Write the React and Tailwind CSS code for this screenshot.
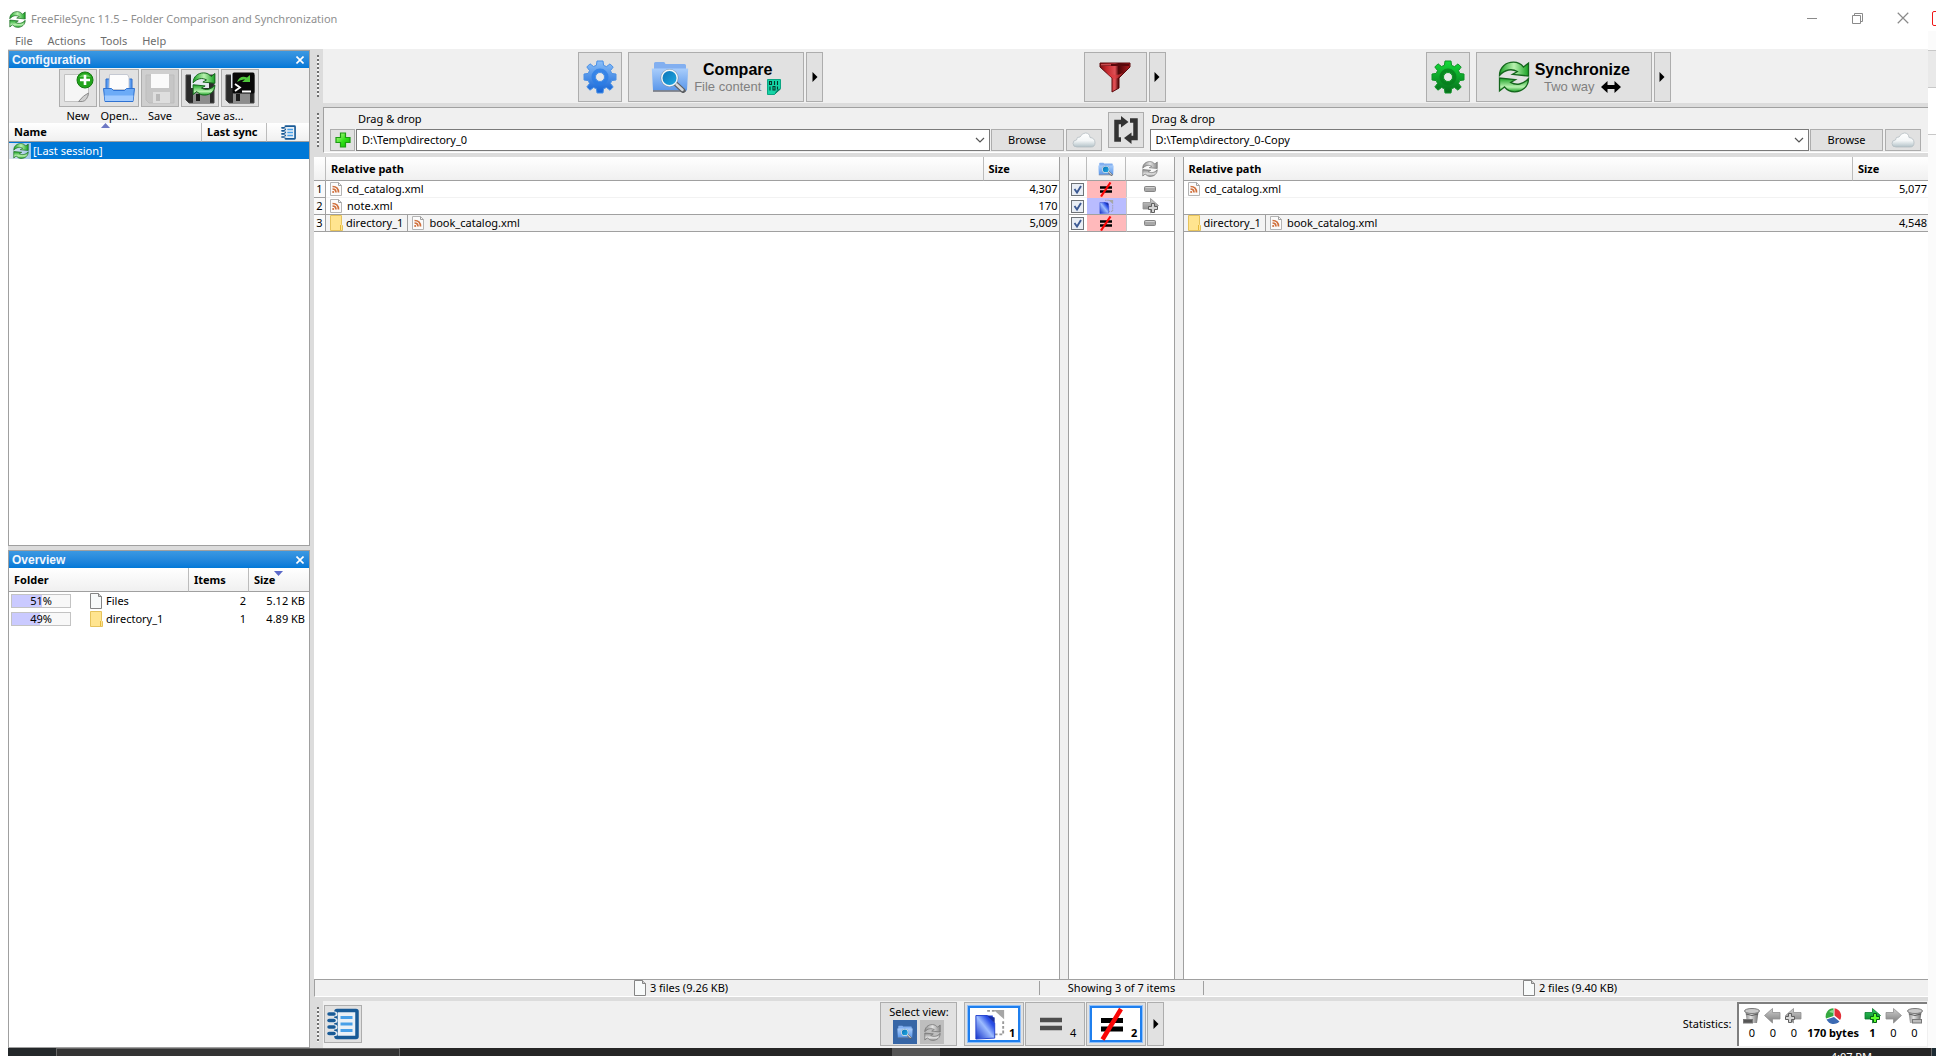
import React from "react";

/* ---------- icons ---------- */

function SyncIcon({ size = 32, gray = false, id }) {
  const dark = gray ? "#6e6e6e" : "#14661c";
  const light = gray ? "#e2e2e2" : "#b9f2b0";
  const mid = gray ? "#8c8c8c" : "#17a022";
  const d = "M1.5 14.5 C1.5 6 8 1.2 15.5 1.2 C20 1.2 23 3 25.5 6 L30.5 2 V15 L14.5 13.4 L19.4 10.6 C14 7.4 7 8.2 1.5 14.5 Z";
  return (
    <svg width={size} height={size} viewBox="0 0 32 32" aria-hidden="true" className="shrink-0">
      <defs>
        <linearGradient id={id} x1="0" y1="0" x2="0" y2="1">
          <stop offset="0" stopColor={mid} />
          <stop offset="0.35" stopColor={light} />
          <stop offset="1" stopColor={mid} />
        </linearGradient>
        <linearGradient id={id + "b"} x1="0" y1="0" x2="1" y2="0">
          <stop offset="0" stopColor={mid} />
          <stop offset="0.5" stopColor={light} />
          <stop offset="1" stopColor={mid} />
        </linearGradient>
      </defs>
      <path d={d} fill={`url(#${id}b)`} stroke={dark} strokeWidth="1.3" />
      <path d={d} transform="rotate(180 16 16)" fill={`url(#${id})`} stroke={dark} strokeWidth="1.3" />
    </svg>
  );
}

function Gear({ id, top, bottom, edge, inner }) {
  return (
    <svg width="34" height="34" viewBox="0 0 34 34" aria-hidden="true">
      <defs>
        <linearGradient id={id} gradientUnits="userSpaceOnUse" x1="0" y1="0" x2="0" y2="34">
          <stop offset="0" stopColor={top} />
          <stop offset="1" stopColor={bottom} />
        </linearGradient>
      </defs>
      <path
        fill={`url(#${id})`}
        stroke={edge}
        strokeWidth="1"
        d="M14 1h6l.6 4.4 2.9 1.2L27 3.900l3.200 3.200-2.700 3.500 1.200 2.900 4.300.5v6l-4.300.6-1.200 2.900 2.700 3.500L27 30.200l-3.500-2.700-2.900 1.200L20 33h-6l-.6-4.300-2.900-1.200L7 30.200 3.800 27l2.700-3.500-1.200-2.900L1 20v-6l4.300-.6 1.200-2.900L3.800 7 7 3.800l3.500 2.700 2.900-1.200z"
      />
      <circle cx="17" cy="17" r="8.500" fill={inner} opacity="0.75" />
      <circle cx="17" cy="17" r="4.500" fill="#e8e8e8" stroke={edge} strokeWidth="1" />
    </svg>
  );
}

function FolderSearch({ w = 38, h = 32, id }) {
  return (
    <svg width={w} height={h} viewBox="0 0 38 32" aria-hidden="true" className="shrink-0">
      <defs>
        <linearGradient id={id} x1="0" y1="0" x2="0" y2="1">
          <stop offset="0" stopColor="#a9cdfb" />
          <stop offset="1" stopColor="#5a97ea" />
        </linearGradient>
        <linearGradient id={id + "l"} x1="0" y1="0" x2="1" y2="1">
          <stop offset="0" stopColor="#0b74b8" />
          <stop offset="1" stopColor="#1fa9e2" />
        </linearGradient>
      </defs>
      <path d="M3 28V2.500Q3 1 4.500 1h8Q14 1 14.500 3h19q1.500 0 1.500 1.500V28z" fill="#82aff0" />
      <path d="M.8 7.500h36.400L36 29.500H2z" fill={`url(#${id})`} />
      <path d="M2 30h33" stroke="#6b6f7a" strokeWidth="1.500" />
      <path d="M25 23l7 6.500" stroke="#5c5f63" strokeWidth="5" strokeLinecap="round" />
      <path d="M24.500 22.500l7 6.500" stroke="#d6d8da" strokeWidth="2.500" strokeLinecap="round" />
      <circle cx="18.500" cy="17" r="9" fill="#7d93a8" />
      <circle cx="18.500" cy="17" r="8.400" fill="#f4f8fb" />
      <circle cx="18.500" cy="17" r="7" fill={`url(#${id}l)`} />
    </svg>
  );
}

function Funnel() {
  return (
    <svg width="32" height="32" viewBox="0 0 32 32" aria-hidden="true">
      <defs>
        <linearGradient id="fun" x1="0" y1="0" x2="1" y2="0">
          <stop offset="0" stopColor="#7d0d10" />
          <stop offset="0.22" stopColor="#c4262b" />
          <stop offset="0.5" stopColor="#e05055" />
          <stop offset="0.62" stopColor="#4c0507" />
          <stop offset="1" stopColor="#b01b20" />
        </linearGradient>
      </defs>
      <path d="M1 2h30v4L20 17v10l-7 4V17L1 6z" fill="url(#fun)" stroke="#5c0a0d" />
      <path d="M2 3h28v2H2z" fill="#5a080b" />
      <path d="M2 3h10v1.500H2z" fill="#c94a4e" />
      <path d="M8 12q8 4 16 0l-5 5q-3 1.500-6 0z" fill="#dd3a40" opacity="0.7" />
    </svg>
  );
}

function Cloud({ id }) {
  return (
    <svg width="24" height="16" viewBox="0 0 24 16" aria-hidden="true">
      <defs>
        <linearGradient id={id} x1="0" y1="0" x2="0" y2="1">
          <stop offset="0" stopColor="#ffffff" />
          <stop offset="0.55" stopColor="#f3f6f7" />
          <stop offset="1" stopColor="#b3c2c8" />
        </linearGradient>
      </defs>
      <path d="M5 15Q1 15 1 11.500 1 8 4.500 8 4.500 4.500 8 5 10 1 13.500 1 17.500 1 18 5.500 23 6 23 10.800 23 15 19 15z" fill={`url(#${id})`} stroke="#b4bdc1" strokeWidth="0.8" />
    </svg>
  );
}

function Notebook({ size }) {
  return (
    <svg width={size} height={size} viewBox="0 0 32 32" aria-hidden="true">
      <rect x="9" y="2.500" width="21" height="27" rx="1" fill="#eaf0f6" stroke="#185a96" strokeWidth="3.500" />
      {[6, 12.500, 19, 25.500].map((y) => (
        <g key={y}>
          <path d={`M3 ${y}H8`} stroke="#e6ebf0" strokeWidth="5" strokeLinecap="round" />
          <path d={`M2 ${y}H7`} stroke="#185a96" strokeWidth="3.500" strokeLinecap="round" />
        </g>
      ))}
      <path d="M13.500 9.500h12M13.500 16h12M13.500 22.500h12" stroke="#479fe8" strokeWidth="3.200" />
    </svg>
  );
}

function Page({ w = 12, h = 16 }) {
  return (
    <svg width={w} height={h} viewBox="0 0 12 16" aria-hidden="true" className="shrink-0">
      <path d="M.5.5h8l3 3v12H.5z" fill="#f8fafa" stroke="#858585" />
      <path d="M8.500.5v3h3" fill="#d0d0d0" stroke="#858585" />
    </svg>
  );
}

function XmlIcon() {
  return (
    <svg width="12" height="14" viewBox="0 0 12 14" aria-hidden="true" className="shrink-0">
      <path d="M.5.5h8l3 3v10H.5z" fill="#fbfbfb" stroke="#b4b4b4" />
      <path d="M8.500.5v3h3" fill="none" stroke="#a0a0a0" />
      <path d="M2.500 4.500q6 0 6 6M2.500 7q3.500 0 3.500 3.500" fill="none" stroke="#d0703c" strokeWidth="1.700" />
      <circle cx="3.200" cy="10" r="1.100" fill="#d0703c" />
    </svg>
  );
}

function FolderIcon() {
  return (
    <svg width="13" height="16" viewBox="0 0 13 16" aria-hidden="true" className="shrink-0">
      <path d="M.5.5h11v9l1 1v5H.5z" fill="#ffe48f" stroke="#e6c35c" />
      <path d="M10.500 10v5" stroke="#e6b93a" />
    </svg>
  );
}

function Floppy({ faded = false }) {
  const body = faded ? "#c6c6c6" : "#2b2b2b";
  return (
    <svg width="32" height="32" viewBox="0 0 32 32" aria-hidden="true">
      <path d="M2 3h28v28H5l-3-3z" fill={body} stroke={faded ? "#bdbdbd" : "#444"} />
      <rect x="7" y="2" width="18" height="14" fill={faded ? "#fafafa" : "#e4e9f0"} />
      <rect x="9" y="20" width="17" height="11" fill={faded ? "#dedede" : "#8d8d8d"} />
      <rect x="12" y="22" width="4" height="7" fill={faded ? "#b9b9b9" : "#1c1c1c"} />
    </svg>
  );
}

function NewIcon() {
  return (
    <svg width="34" height="34" viewBox="0 0 34 34" aria-hidden="true">
      <path d="M3.500 3.500h24v21l-6 6h-18z" fill="#f6f6f6" stroke="#c2c2c2" />
      <path d="M27.500 22q-5 2-10 8.500h4q5-1 6-8.500z" fill="#cfcfcf" stroke="#8e8e8e" />
      <circle cx="24" cy="9" r="8" fill="#22a51c" stroke="#147a10" />
      <path d="M18 6q6-6 12 0z" fill="#7fdc74" opacity="0.7" />
      <path d="M24 4v10M19 9h10" stroke="#fff" strokeWidth="2.600" />
    </svg>
  );
}

function OpenIcon() {
  return (
    <svg width="34" height="34" viewBox="0 0 34 34" aria-hidden="true">
      <path d="M4 8h26v12H4z" fill="#5b9cf0" stroke="#2d6ccb" />
      <path d="M7.500 3.500h18l1.500 3v12h-20z" fill="#fdfdfd" stroke="#c5c9d2" />
      <path d="M1.500 17.500h8l2 2h11l2-2h8l-1.500 13h-28z" fill="#6cabf7" stroke="#2f72d2" />
      <path d="M2.500 24.500h29l-.7 5.500h-27.600z" fill="#9fcaff" />
    </svg>
  );
}

function SaveAsSync() {
  return (
    <span className="grid">
      <span className="col-start-1 row-start-1"><Floppy /></span>
      <span className="col-start-1 row-start-1 pl-2"><SyncIcon size={24} id="sas" /></span>
    </span>
  );
}

function SaveAsBatch() {
  return (
    <span className="grid">
      <span className="col-start-1 row-start-1"><Floppy /></span>
      <span className="col-start-1 row-start-1 pl-2">
        <svg width="23" height="22" viewBox="0 0 23 22" aria-hidden="true">
          <rect x=".5" y=".5" width="22" height="21" rx="1.500" fill="#080808" />
          <path d="M5 10Q8 3 15 5.500L18 3v7h-8l3-2.500Q9 7 5 10z" fill="#4fc93c" />
          <path d="M3 12l5 3.500L3 19M10 19.500h9" fill="none" stroke="#fff" strokeWidth="1.800" />
        </svg>
      </span>
    </span>
  );
}

function NotEqual({ w, h }) {
  return (
    <svg width={w} height={h} viewBox="0 0 24 34" preserveAspectRatio="none" aria-hidden="true">
      <path d="M1 13.500h22M1 22h22" stroke="#000" strokeWidth="5" />
      <path d="M2.500 32.500L21 2" stroke="#fa0505" strokeWidth="4.500" />
    </svg>
  );
}

function NotEqualSmall() {
  return (
    <svg width="14" height="15" viewBox="0 0 14 15" aria-hidden="true">
      <path d="M1 5.500h12M1 9.500h12" stroke="#000" strokeWidth="2.600" />
      <path d="M2 14.500L11.500.5" stroke="#fa0505" strokeWidth="2.200" />
    </svg>
  );
}

function LeftOnly({ size, id }) {
  return (
    <svg width={size} height={size} viewBox="0 0 34 34" aria-hidden="true">
      <defs>
        <linearGradient id={id} x1="0" y1="1" x2="1" y2="0">
          <stop offset="0" stopColor="#1231c8" />
          <stop offset="0.5" stopColor="#9dbcff" />
          <stop offset="0.75" stopColor="#2a4ee6" />
          <stop offset="1" stopColor="#1231c8" />
        </linearGradient>
      </defs>
      <path d="M14 3h8M31 14v14h-9" fill="none" stroke="#9a9a9a" strokeWidth="2" strokeDasharray="3 2" />
      <path d="M21 2h11v10z" fill="#a6a6a6" />
      <path d="M11 8h9v24h-8z" fill="#2346dd" />
      <path d="M2 8h12l8 8v16l-20 1z" fill={`url(#${id})`} stroke="#2240cc" />
      <path d="M14 8l8 8v-6z" fill="#1a2fa0" />
    </svg>
  );
}

function Dash() {
  return (
    <svg width="12" height="6" viewBox="0 0 12 6" aria-hidden="true">
      <rect x=".5" y=".5" width="11" height="5" rx="1" fill="#a8a8a8" stroke="#858585" />
      <path d="M1.500 1.500h9" stroke="#d2d2d2" />
    </svg>
  );
}

function Arrow({ left = false, plus = false, green = false, id }) {
  return (
    <svg width="17" height="16" viewBox="0 0 17 16" aria-hidden="true">
      <defs>
        <linearGradient id={id} x1="0" y1="0" x2="0" y2="1">
          <stop offset="0" stopColor={green ? "#2fd15a" : "#cfcfcf"} />
          <stop offset="1" stopColor={green ? "#04752a" : "#7c7c7c"} />
        </linearGradient>
      </defs>
      <path
        d={left ? "M.5 7.500L8.500 .5v4h7.500v6.500H8.500v4z" : "M16.500 7.500L8.500 .5v4H1v6.500h7.500v4z"}
        fill={`url(#${id})`}
        stroke={green ? "#0a7a2f" : "#8f8f8f"}
        strokeWidth="0.8"
      />
      {plus && (
        <g transform={left ? "translate(0 5)" : "translate(6 5)"}>
          <path d="M3.500.5h3v3h3v3h-3v3h-3v-3h-3v-3h3z" fill={green ? "#5cff2a" : "#d4d4d4"} stroke={green ? "#075e14" : "#5f5f5f"} />
        </g>
      )}
    </svg>
  );
}

function Trash({ right = false, id }) {
  return (
    <svg width="17" height="16" viewBox="0 0 17 16" aria-hidden="true">
      <defs>
        <linearGradient id={id} x1="0" y1="0" x2="1" y2="0">
          <stop offset="0" stopColor="#8a8a8a" />
          <stop offset="0.4" stopColor="#e4e4e4" />
          <stop offset="1" stopColor="#6c6c6c" />
        </linearGradient>
      </defs>
      <path d="M2.500 4h13l-1.500 11h-10z" fill={`url(#${id})`} />
      <ellipse cx="9" cy="3" rx="7.500" ry="2.500" fill="#c9c9c9" stroke="#7b7b7b" />
      <path d="M3 6q6 3 12 0" stroke="#5d5d5d" fill="none" />
      <rect x={right ? 6.500 : 0.5} y="11.500" width="9" height="3.500" fill={right ? "#bcbcbc" : "#555"} stroke="#777" />
    </svg>
  );
}

function Pie() {
  return (
    <svg width="17" height="16" viewBox="0 0 17 16" aria-hidden="true">
      <path d="M8.500 8V.3A8 8 0 0 0 1 10.500z" fill="#35a83f" />
      <path d="M9.500 7.500V.3A7.700 7.700 0 0 1 15 12z" fill="#e23038" />
      <path d="M1.500 11.500L9 9l5.500 4.500A8 8 0 0 1 1.500 11.500z" fill="#3c6bb4" />
      <path d="M4 4q2-2 4-2v3z" fill="#8fdc90" />
    </svg>
  );
}

function Swap() {
  return (
    <svg width="26" height="28" viewBox="0 0 26 28" aria-hidden="true">
      <path d="M8 23.500H3.500V6H9" fill="none" stroke="#333" strokeWidth="4.500" />
      <path d="M8 0l7.500 6L8 11.500z" fill="#333" />
      <path d="M17 4.500h5.500V22H17" fill="none" stroke="#333" strokeWidth="4.500" />
      <path d="M18.500 16.500L11 22l7.500 6z" fill="#333" />
    </svg>
  );
}

function Plus() {
  return (
    <svg width="16" height="16" viewBox="0 0 16 16" aria-hidden="true">
      <defs>
        <linearGradient id="plus" x1="0" y1="0" x2="1" y2="1">
          <stop offset="0" stopColor="#c8ff9a" />
          <stop offset="0.55" stopColor="#2fe016" />
          <stop offset="1" stopColor="#0fb400" />
        </linearGradient>
      </defs>
      <path d="M5.500 1h5v4.500H15v5h-4.500V15h-5v-4.500H1v-5h4.500z" fill="url(#plus)" stroke="#1c9a12" strokeWidth="1.200" />
    </svg>
  );
}

function ContentBadge() {
  return (
    <svg width="14" height="16" viewBox="0 0 14 16" aria-hidden="true">
      <path d="M.5.5h13v9l-6 6h-7z" fill="#14d3a6" stroke="#0aa682" />
      <path d="M13.500 9.500q-4 .5-6 6l6-5z" fill="#0b8266" />
      <g fill="none" stroke="#06382d" strokeWidth="1.100">
        <path d="M2.500 2.500h2v3h-2zM7.500 2v4M10.500 2v4M3 7.500v4M6 7.500h2v3.500H6zM10.500 7.500v3" />
      </g>
    </svg>
  );
}

function Triangle() {
  return (
    <svg width="6" height="10" viewBox="0 0 6 10" aria-hidden="true">
      <path d="M.5 0L5.500 5 .5 10z" fill="#000" />
    </svg>
  );
}

function CloseX({ size = 8, color = "#fff", width = 1.6 }) {
  return (
    <svg width={size} height={size} viewBox="0 0 8 8" aria-hidden="true">
      <path d="M.5.5l7 7M7.500.5l-7 7" stroke={color} strokeWidth={width} />
    </svg>
  );
}

/* ---------- building blocks ---------- */

const btn = "flex items-center justify-center border border-[#adadad] bg-[#e1e1e1]";
const headGrad = "bg-linear-to-b from-white to-[#f0f0f0]";

function Grip() {
  return (
    <div className="flex w-[9px] shrink-0 bg-[#dcdcdc] py-[6px] pl-[3px]">
      <div className="w-[2px] bg-[repeating-linear-gradient(to_bottom,#6e6e6e_0px,#6e6e6e_2px,#f6f6f6_2px,#f6f6f6_4px)]" />
    </div>
  );
}

function PanelTitle({ children }) {
  return (
    <div className="flex h-[17px] items-center justify-between bg-linear-to-b from-[#3a98e2] to-[#0078d7] pr-[5px] pl-[3px]">
      <h2 className="font-['Liberation_Sans',sans-serif] text-[12px] leading-[16px] font-bold text-[#f0f6fc]">{children}</h2>
      <button aria-label={"Close " + children}><CloseX /></button>
    </div>
  );
}

function HeadCell({ className = "", children, label }) {
  return (
    <th scope="col" aria-label={label} className={"border-r border-b border-r-[#bcbcbc] border-b-[#a0a0a0] p-0 px-[5px] text-left font-bold last:border-r-0 " + headGrad + " " + className}>
      {children}
    </th>
  );
}

function FolderPick({ id, value, label, addButton }) {
  return (
    <div className="flex min-w-0 flex-1 flex-col justify-end gap-[3px]">
      <label htmlFor={id} className={addButton ? "pl-[28px]" : "pl-[2px]"}>{label}</label>
      <div className="flex h-[23px] gap-[1px]">
        {addButton && <button aria-label="Add folder pair" className={btn + " w-[25px] shrink-0"}><Plus /></button>}
        <div className="grid min-w-0 flex-1 border border-[#7a7a7a] bg-white">
          <select id={id} className="col-start-1 row-start-1 w-full appearance-none bg-transparent pr-6 pb-[1px] pl-[5px]">
            <option>{value}</option>
          </select>
          <svg width="10" height="6" viewBox="0 0 10 6" aria-hidden="true" className="pointer-events-none col-start-1 row-start-1 mr-1 self-center justify-self-end">
            <path d="M1 1l4 4 4-4" fill="none" stroke="#555" strokeWidth="1.200" />
          </svg>
        </div>
        <button className={btn + " w-[73px] shrink-0"}>Browse</button>
        <button aria-label="Online storage" className={btn + " ml-[1px] w-[36px] shrink-0"}><Cloud id={id + "cloud"} /></button>
      </div>
    </div>
  );
}

const paneCell = "border-b p-0";

function FileLabel({ icon, children }) {
  return (
    <span className="flex items-center gap-[5px]">
      {icon}
      <span>{children}</span>
    </span>
  );
}

function PathCell({ row }) {
  if (!row.name) return null;
  return (
    <div className="flex h-[16px] items-center overflow-hidden">
      {row.folder && (
        <span className="mr-[4px] flex h-full items-center gap-[3px] border-r border-[#a0a0a0] pr-[4px]">
          <FolderIcon />
          <span>{row.folder}</span>
        </span>
      )}
      <FileLabel icon={<XmlIcon />}>{row.name}</FileLabel>
    </div>
  );
}

const leftRows = [
  { n: 1, name: "cd_catalog.xml", size: "4,307", line: "border-b-[#f2f2f2]" },
  { n: 2, name: "note.xml", size: "170", line: "border-b-[#a0a0a0]" },
  { n: 3, folder: "directory_1", name: "book_catalog.xml", size: "5,009", line: "border-b-[#a0a0a0] bg-[#f4f4f4]" },
];
const rightRows = [
  { n: 1, name: "cd_catalog.xml", size: "5,077", line: "border-b-[#f2f2f2]" },
  { n: 2, name: "", size: "", line: "border-b-[#a0a0a0]" },
  { n: 3, folder: "directory_1", name: "book_catalog.xml", size: "4,548", line: "border-b-[#a0a0a0] bg-[#f4f4f4]" },
];
const midRows = [
  { n: 1, diff: true, line: "border-b-[#f2f2f2]" },
  { n: 2, diff: false, line: "border-b-[#a0a0a0]" },
  { n: 3, diff: true, line: "border-b-[#a0a0a0]" },
];

function FileTable({ rows, numbered, label }) {
  return (
    <table aria-label={label} className="w-full table-fixed border-separate border-spacing-0">
      <colgroup>
        {numbered && <col className="w-[12px]" />}
        <col />
        <col className="w-[75px]" />
      </colgroup>
      <thead>
        <tr className="h-[24px]">
          {numbered && <HeadCell label="Row" />}
          <HeadCell>Relative path</HeadCell>
          <HeadCell>Size</HeadCell>
        </tr>
      </thead>
      <tbody>
        {rows.map((r) => (
          <tr key={r.n} className="h-[17px]">
            {numbered && <td className="border-r border-b border-[#a0a0a0] bg-[#fafafa] p-0 text-center">{r.n}</td>}
            <td className={paneCell + " pl-[4px] " + r.line}><PathCell row={r} /></td>
            <td className={paneCell + " pr-[1px] text-right " + r.line}>{r.size}</td>
          </tr>
        ))}
      </tbody>
    </table>
  );
}

function MiddleTable() {
  return (
    <table aria-label="Differences and actions" className="w-full table-fixed border-separate border-spacing-0">
      <colgroup>
        <col className="w-[18px]" />
        <col className="w-[39px]" />
        <col />
      </colgroup>
      <thead>
        <tr className="h-[24px]">
          <HeadCell label="Include" />
          <HeadCell label="Category"><span className="flex justify-center"><FolderSearch w={16} h={14} id="hc" /></span></HeadCell>
          <HeadCell label="Action"><span className="flex justify-center"><SyncIcon size={16} gray id="ha" /></span></HeadCell>
        </tr>
      </thead>
      <tbody>
        {midRows.map((r) => (
          <tr key={r.n} className="h-[17px]">
            <td className={paneCell + " " + r.line}>
              <span className="ml-[2px] grid size-[13px]">
                <input type="checkbox" defaultChecked aria-label={"Include row " + r.n} className="col-start-1 row-start-1 size-[13px] appearance-none border border-[#6e7378] bg-[#e9eef5]" />
                <svg width="13" height="13" viewBox="0 0 13 13" aria-hidden="true" className="pointer-events-none col-start-1 row-start-1">
                  <path d="M3.500 6l2.500 3.500L10 3" fill="none" stroke="#3c5a94" strokeWidth="1.900" />
                </svg>
              </span>
            </td>
            <td className={"p-0 " + (r.n === 2 ? "border-b border-[#a0a0a0] bg-[#b9bcff]" : "bg-[#ffb9bb]" + (r.n === 3 ? " border-b border-[#a0a0a0]" : ""))}>
              <span className="flex h-[16px] items-center justify-center">
                {r.diff ? <NotEqualSmall /> : <LeftOnly size={15} id="lo-s" />}
              </span>
            </td>
            <td className={paneCell + " border-l border-l-[#c8c8c8] " + r.line}>
              <span className="flex h-[16px] items-center justify-center">
                {r.diff ? <Dash /> : <Arrow plus id="mid-a" />}
              </span>
            </td>
          </tr>
        ))}
      </tbody>
    </table>
  );
}

function ConfigButton({ label, children, disabled }) {
  return (
    <button
      aria-label={label}
      disabled={disabled}
      className={"flex h-[38px] w-full items-center justify-center border border-[#adadad] " + (disabled ? "bg-[#cfcfcf]" : "bg-[#e1e1e1]")}
    >
      {children}
    </button>
  );
}

function OverviewRow({ pct, icon, name, items, size }) {
  return (
    <tr className="h-[18px]">
      <td className="p-0 pl-[2px]">
        <span className="flex items-center">
          <span className="grid h-[14px] w-[60px] border border-[#c3c3c3] bg-[#f8f8f8]">
            <span className="col-start-1 row-start-1 bg-[#cacaff]" style={{ width: pct + "%" }} />
            <span className="col-start-1 row-start-1 self-center text-center leading-[12px]">{pct}%</span>
          </span>
          <span className="ml-[19px] flex w-[16px]">{icon}</span>
          <span>{name}</span>
        </span>
      </td>
      <td className="p-0 pr-[3px] text-right">{items}</td>
      <td className="p-0 pr-[4px] text-right">{size}</td>
    </tr>
  );
}

function MainButton({ icon, title, detail, badge }) {
  return (
    <button className={btn + " w-[176px] gap-[5px] font-['Liberation_Sans',sans-serif]"}>
      {icon}
      <span className="flex flex-col items-center pt-[2px]">
        <span className="text-[16px] leading-[18px] font-bold">{title}</span>
        <span className="flex h-[16px] items-center gap-[6px] text-[13px] leading-[16px] text-[#808080]">
          {detail}
          {badge}
        </span>
      </span>
    </button>
  );
}

function ArrowButton({ label }) {
  return <button aria-label={label} className={btn + " w-[17px]"}><Triangle /></button>;
}

function ViewToggle({ active, count, label, children }) {
  return (
    <button aria-pressed={active} aria-label={label} className={btn + " h-[44px] w-[60px] p-[3px]"}>
      <span className={"flex h-full w-full items-end pr-[3px] " + (active ? "border-2 border-[#1f7fee] bg-white outline outline-[#8fc0fb]" : "border-2 border-transparent")}>
        <span className="flex h-full flex-1 items-center justify-center">{children}</span>
        <span className={active ? "font-bold" : ""}>{count}</span>
      </span>
    </button>
  );
}

function Stat({ icon, value, bold }) {
  return (
    <div className="flex min-w-[21px] flex-col items-center">
      {icon}
      <span className={"leading-[18px] " + (bold ? "font-bold" : "")}>{value}</span>
    </div>
  );
}

/* ---------- page ---------- */

export default function App() {
  return (
    <div className="flex h-screen flex-col overflow-hidden bg-white font-['Noto_Sans',sans-serif] text-[11px] leading-[14px] text-black">
      <div className="flex min-h-0 flex-1 pl-2">
        <div className="flex min-w-0 flex-1 flex-col">
          {/* title bar */}
          <header className="flex h-[34px] items-end">
            <div className="flex h-[30px] flex-1 items-center gap-[5px] text-[#8f8f8f]">
              <span className="ml-[1px]"><SyncIcon size={17} id="app" /></span>
              <h1>FreeFileSync 11.5 – Folder Comparison and Synchronization</h1>
            </div>
            <div className="flex h-[34px] items-center gap-[34px] pt-[2px] pr-[19px]">
              <button aria-label="Minimize">
                <svg width="12" height="11" viewBox="0 0 12 11"><path d="M1 5.500h10" stroke="#8a8a8a" /></svg>
              </button>
              <button aria-label="Restore">
                <svg width="11" height="11" viewBox="0 0 11 11">
                  <path d="M.5 2.500h8v8h-8zM2.500 2.500v-2h8v8h-2" fill="none" stroke="#8a8a8a" />
                </svg>
              </button>
              <button aria-label="Close"><CloseX size={12} color="#8a8a8a" width={0.8} /></button>
            </div>
          </header>
          <nav className="flex h-[15px] items-start gap-[15px] pl-[7px] text-[#6c6c6c]">
            <button>File</button>
            <button>Actions</button>
            <button>Tools</button>
            <button>Help</button>
          </nav>

          <div className="flex min-h-0 flex-1 bg-[#dcdcdc]">
            {/* left column */}
            <aside className="flex w-[302px] shrink-0 flex-col pt-[1px]">
              <section className="flex h-[496px] flex-col border border-[#a0a0a0] bg-white">
                <PanelTitle>Configuration</PanelTitle>
                <div className="flex justify-center gap-[2px] bg-[#f0f0f0] pt-[1px]">
                  <div className="flex w-[38px] flex-col items-center gap-[2px]">
                    <ConfigButton label="New"><NewIcon /></ConfigButton>
                    <span>New</span>
                  </div>
                  <div className="flex w-[40px] flex-col items-center gap-[2px]">
                    <ConfigButton label="Open"><OpenIcon /></ConfigButton>
                    <span>Open...</span>
                  </div>
                  <div className="flex w-[38px] flex-col items-center gap-[2px]">
                    <ConfigButton label="Save" disabled><Floppy faded /></ConfigButton>
                    <span>Save</span>
                  </div>
                  <div className="flex w-[78px] flex-col items-center gap-[2px]">
                    <div className="grid w-full grid-cols-2 gap-[2px]">
                      <ConfigButton label="Save as"><SaveAsSync /></ConfigButton>
                      <ConfigButton label="Save as batch job"><SaveAsBatch /></ConfigButton>
                    </div>
                    <span>Save as...</span>
                  </div>
                </div>
                <table aria-label="Configurations" className="w-full table-fixed border-separate border-spacing-0">
                  <colgroup>
                    <col />
                    <col className="w-[65px]" />
                    <col className="w-[42px]" />
                  </colgroup>
                  <thead>
                    <tr className="h-[19px]">
                      <HeadCell>
                        <span className="relative block">
                          Name
                          <svg width="9" height="5" viewBox="0 0 9 5" aria-hidden="true" className="absolute -top-[2px] left-[87px]"><path d="M0 5l4.500-5L9 5z" fill="#6d78c4" /></svg>
                        </span>
                      </HeadCell>
                      <HeadCell>Last sync</HeadCell>
                      <HeadCell label="Log"><span className="flex justify-center"><Notebook size={15} /></span></HeadCell>
                    </tr>
                  </thead>
                  <tbody>
                    <tr className="h-[17px] bg-[#0078d7] text-white">
                      <td colSpan={3} className="p-0">
                        <span className="flex items-center">
                          <span className="flex w-[22px] justify-center bg-linear-to-r from-[#dfe7ee] to-[#9cc6ea] pl-[2px]"><SyncIcon size={16} id="ls" /></span>
                          <span className="pl-[2px]">[Last session]</span>
                        </span>
                      </td>
                    </tr>
                  </tbody>
                </table>
              </section>
              <section className="mt-[4px] flex min-h-0 flex-1 flex-col border border-[#a0a0a0] bg-white">
                <PanelTitle>Overview</PanelTitle>
                <table aria-label="Folder overview" className="w-full table-fixed border-separate border-spacing-0">
                  <colgroup>
                    <col />
                    <col className="w-[60px]" />
                    <col className="w-[60px]" />
                  </colgroup>
                  <thead>
                    <tr className="h-[24px]">
                      <HeadCell>Folder</HeadCell>
                      <HeadCell>Items</HeadCell>
                      <HeadCell>
                        <span className="relative block">
                          Size
                          <svg width="9" height="5" viewBox="0 0 9 5" aria-hidden="true" className="absolute -top-[2px] left-[20px]"><path d="M0 0h9L4.500 5z" fill="#5a68c8" /></svg>
                        </span>
                      </HeadCell>
                    </tr>
                  </thead>
                  <tbody>
                    <OverviewRow pct={51} icon={<Page />} name="Files" items="2" size="5.12 KB" />
                    <OverviewRow pct={49} icon={<FolderIcon />} name="directory_1" items="1" size="4.89 KB" />
                  </tbody>
                </table>
              </section>
            </aside>

            {/* main column */}
            <main className="ml-[4px] flex min-w-0 flex-1 flex-col">
              <div className="flex h-[54px] shrink-0">
                <Grip />
                <div className="flex flex-1 items-end justify-evenly bg-[#f0f0f0] pr-[2px] pb-[1px] [&>div]:h-[50px]">
                  <div className="flex">
                    <button aria-label="Comparison settings" className={btn + " mr-[6px] w-[44px]"}><Gear id="gb" top="#8ec2fa" bottom="#0d5fd4" edge="#4a90e6" inner="#2a7ce6" /></button>
                    <MainButton icon={<FolderSearch id="cmp" />} title="Compare" detail="File content" badge={<ContentBadge />} />
                    <span className="w-[2px]" />
                    <ArrowButton label="Comparison variants" />
                  </div>
                  <div className="flex gap-[2px] px-[5px]">
                    <button aria-label="Filter" className={btn + " w-[63px]"}><Funnel /></button>
                    <ArrowButton label="Filter options" />
                  </div>
                  <div className="flex">
                    <button aria-label="Synchronization settings" className={btn + " mr-[6px] w-[44px]"}><Gear id="gg" top="#14e03a" bottom="#06681a" edge="#0f9426" inner="#077d1c" /></button>
                    <MainButton
                      icon={<SyncIcon size={32} id="syn" />}
                      title="Synchronize"
                      detail="Two way"
                      badge={
                        <svg width="20" height="12" viewBox="0 0 20 12" aria-hidden="true">
                          <path d="M0 6l6.500-6v4h7V0L20 6l-6.500 6V8h-7v4z" fill="#000" />
                        </svg>
                      }
                    />
                    <span className="w-[2px]" />
                    <ArrowButton label="Synchronization variants" />
                  </div>
                </div>
              </div>

              <div className="mt-[4px] flex h-[46px] shrink-0">
                <Grip />
                <div className="flex min-w-0 flex-1 gap-[6px] border-t border-b border-l border-t-[#a0a0a0] border-b-white border-l-[#a0a0a0] bg-[#f0f0f0] pt-[4px] pr-[7px] pb-[1px] pl-[6px]">
                  <FolderPick id="dir-left" label="Drag & drop" value="D:\Temp\directory_0" addButton />
                  <button aria-label="Swap sides" className={btn + " size-[36px] shrink-0"}><Swap /></button>
                  <FolderPick id="dir-right" label="Drag & drop" value="D:\Temp\directory_0-Copy" />
                </div>
              </div>

              <div className="mt-[4px] flex min-h-0 flex-1 gap-[8px] bg-[#f0f0f0]">
                <div className="min-w-0 flex-1 border-r border-[#a0a0a0] bg-white"><FileTable rows={leftRows} numbered label="Left side" /></div>
                <div className="w-[107px] shrink-0 border-r border-l border-[#a0a0a0] bg-white"><MiddleTable /></div>
                <div className="min-w-0 flex-1 border-l border-[#a0a0a0] bg-white"><FileTable rows={rightRows} label="Right side" /></div>
              </div>

              <footer className="flex h-[18px] shrink-0 items-center border-t border-b border-l border-t-[#a0a0a0] border-b-white border-l-[#a0a0a0] bg-[#f0f0f0]">
                <div className="flex flex-1 items-center justify-center gap-[4px] pl-[8px]"><Page /> 3 files (9.26 KB)</div>
                <div className="w-[165px] border-r border-l border-[#a0a0a0] text-center">Showing 3 of 7 items</div>
                <div className="flex flex-1 items-center justify-center gap-[4px] pl-[8px]"><Page /> 2 files (9.40 KB)</div>
              </footer>

              <div className="mt-[4px] flex h-[47px] shrink-0">
                <Grip />
                <div className="flex flex-1 items-start justify-between bg-[#f0f0f0] pt-[1px] pr-[1px] pl-[1px]">
                  <button aria-label="Show log" className={btn + " mt-[3px] size-[38px]"}><Notebook size={32} /></button>
                  <div className="flex">
                    <div className="mr-[7px] flex w-[77px] flex-col items-center border border-[#adadad] bg-[#e1e1e1] pt-[2px]">
                      <span>Select view:</span>
                      <div className="flex gap-[3px] pt-[1px]">
                        <button aria-label="View by category" className="flex h-[24px] w-[24px] items-center justify-center bg-[#3766a6]"><FolderSearch w={16} h={14} id="vc" /></button>
                        <button aria-label="View by action" className="flex h-[24px] w-[24px] items-center justify-center bg-[#bebebe]"><SyncIcon size={17} gray id="va" /></button>
                      </div>
                    </div>
                    <div className="flex gap-[1px]">
                      <ViewToggle active count="1" label="Left only"><LeftOnly size={32} id="lo" /></ViewToggle>
                      <ViewToggle count="4" label="Equal">
                        <svg width="22" height="16" viewBox="0 0 22 16" aria-hidden="true"><path d="M0 4h22M0 12h22" stroke="#4d4d4d" strokeWidth="4.500" /></svg>
                      </ViewToggle>
                      <ViewToggle active count="2" label="Different"><NotEqual w={24} h={34} /></ViewToggle>
                      <ArrowButton label="View options" />
                    </div>
                  </div>
                  <div className="flex h-[44px] items-center gap-[6px]">
                    <span>Statistics:</span>
                    <div className="flex h-full items-center border-t-2 border-l-2 border-[#7f7f7f] bg-white px-[2px]">
                      <Stat icon={<Trash id="t1" />} value="0" />
                      <Stat icon={<Arrow left id="a1" />} value="0" />
                      <Stat icon={<Arrow left plus id="a2" />} value="0" />
                      <div className="px-[3px]"><Stat icon={<Pie />} value="170 bytes" bold /></div>
                      <Stat icon={<Arrow plus green id="a3" />} value="1" bold />
                      <Stat icon={<Arrow id="a4" />} value="0" />
                      <Stat icon={<Trash right id="t2" />} value="0" />
                    </div>
                  </div>
                </div>
              </div>
            </main>
          </div>
        </div>

        {/* edge of the neighbouring window */}
        <div className="flex w-2 shrink-0 flex-col overflow-hidden bg-[#fbfbfb]">
          <div className="flex h-[31px] shrink-0 items-end bg-white pl-[4px]">
            <span className="mb-[5px] h-[15px] w-[14px] shrink-0 rounded-[2px] border border-[#f01818]" />
          </div>
          <div className="h-[20px] shrink-0 border-b border-[#c8c8c8]" />
          <div className="h-[37px] shrink-0 border-b border-[#c8c8c8] bg-[#e9e9e9]" />
          <div className="h-[47px] shrink-0 border-b border-[#c8c8c8] bg-white" />
        </div>
      </div>

      {/* desktop task bar */}
      <div className="ml-2 flex h-2 shrink-0 items-start overflow-hidden bg-[#262626] text-white">
        <span className="h-2 w-[48px] bg-[#24282a]" />
        <span className="h-2 w-[344px] border-t border-r border-l border-[#666] bg-[#333]" />
        <span className="h-2 w-[492px]" />
        <span className="h-2 w-[48px] bg-[#555]" />
        <span className="ml-auto pt-[2px] pr-[59px] whitespace-nowrap">4:07 PM</span>
        <span className="h-2 w-[5px] border-l border-[#666] bg-[#1c2b33]" />
      </div>
    </div>
  );
}
